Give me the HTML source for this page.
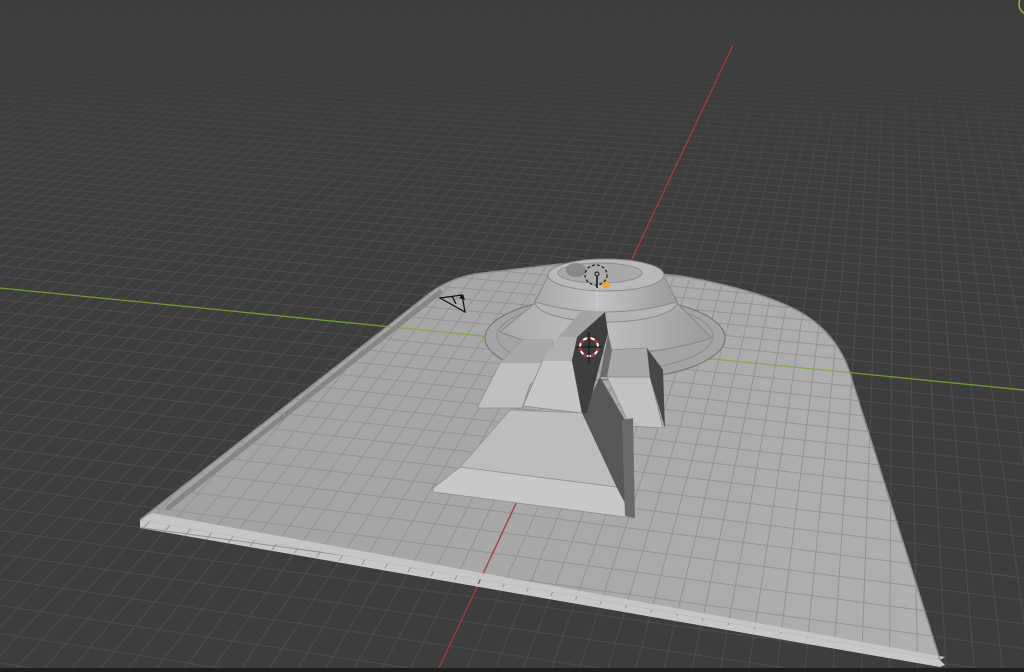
<!DOCTYPE html>
<html><head><meta charset="utf-8"><style>
html,body{margin:0;padding:0;background:#3d3d3d;width:1024px;height:672px;overflow:hidden}
svg{display:block}
</style></head><body>
<svg id="s" width="1024" height="672" viewBox="0 0 1024 672" xmlns="http://www.w3.org/2000/svg">
<defs>
<clipPath id="plateClip"><path d="M140,520 L425,297 Q445,280 475,274 L560,264 L680,276 Q760,290 800,312 Q840,335 852,380 L940,660 L140,528 Z"/></clipPath>
<clipPath id="scr"><rect x="0" y="0" width="1024" height="672"/></clipPath>
<linearGradient id="fade" x1="0" y1="0" x2="0" y2="1">
<stop offset="0" stop-color="#3d3d3d" stop-opacity="1"/>
<stop offset="0.15" stop-color="#3d3d3d" stop-opacity="0.9"/>
<stop offset="0.55" stop-color="#3d3d3d" stop-opacity="0.3"/>
<stop offset="1" stop-color="#3d3d3d" stop-opacity="0"/>
</linearGradient>
<linearGradient id="plateG" x1="0" y1="0" x2="1" y2="0">
<stop offset="0" stop-color="#a2a2a2"/><stop offset="1" stop-color="#b0b0b0"/>
</linearGradient>
<linearGradient id="domeG" x1="0" y1="0" x2="1" y2="0">
<stop offset="0" stop-color="#a8a8a8"/><stop offset="0.45" stop-color="#c2c2c2"/><stop offset="1" stop-color="#9a9a9a"/>
</linearGradient>
</defs>
<g clip-path="url(#scr)">
<rect width="1024" height="672" fill="#3d3d3d"/>
<g id="floor" stroke="#4d4d4d" stroke-width="1" fill="none"></g>
<rect x="0" y="0" width="1024" height="300" fill="url(#fade)"/>
<line x1="437" y1="672" x2="733" y2="45" stroke="#b03a3a" stroke-width="1.2"/>
<line x1="0" y1="288" x2="1024" y2="390" stroke="#6f9a2e" stroke-width="1.3"/>
<path d="M140,520 L140,528 L940,667 L945,665 L940,660 Z" fill="#c8c8c8"/>
<path d="M140,520 L425,297 Q445,280 475,274 L560,264 L680,276 Q760,290 800,312 Q840,335 852,380 L940,660 L140,520 Z" fill="url(#plateG)"/>
<g clip-path="url(#plateClip)">
<g id="plategrid" stroke="#939393" stroke-width="1" fill="none"></g>
<line x1="0" y1="288" x2="1024" y2="390" stroke="#7fae3a" stroke-width="1.3" opacity="0.8"/>
<line x1="437" y1="672" x2="540" y2="452" stroke="#b03a3a" stroke-width="1.3"/>
</g>
<path d="M140,520 L152,513 L945,657 L940,660 Z" fill="#c6c6c6"/>
<path d="M168,508 L440,292" stroke="#858585" stroke-width="5" stroke-linecap="round"/>
<path d="M140,520 L425,297 Q445,280 475,274 L560,264 L680,276 Q760,290 800,312 Q840,335 852,380 L940,660" stroke="#8e8e8e" stroke-width="1.5" fill="none"/>
<ellipse cx="605" cy="338" rx="120" ry="42" fill="#a4a4a4" stroke="#767676" stroke-width="1.2"/>
<ellipse cx="605" cy="336" rx="108" ry="35" fill="none" stroke="#8a8a8a" stroke-width="1"/>
<path d="M500,332 Q600,372 712,338 L677,303 Q606,322 535,303 Z" fill="url(#domeG)" stroke="#868686"/>
<ellipse cx="606" cy="302" rx="71" ry="20" fill="#b4b4b4" stroke="#888"/>
<path d="M535,302 Q606,322 677,302 L664,276 Q606,292 548,276 Z" fill="url(#domeG)" stroke="#8a8a8a"/>
<ellipse cx="606" cy="275" rx="58" ry="16" fill="#b9b9b9" stroke="#888"/>
<ellipse cx="600" cy="273" rx="42" ry="10" fill="#a9a9a9" stroke="#8c8c8c"/>
<ellipse cx="576" cy="270" rx="10" ry="7" fill="#888"/>
<ellipse cx="596" cy="275" rx="11" ry="10" fill="none" stroke="#222" stroke-width="1.3" stroke-dasharray="3 2"/>
<line x1="597" y1="276" x2="597" y2="288" stroke="#111" stroke-width="1.5"/>
<circle cx="597" cy="274" r="2" fill="none" stroke="#111"/>
<circle cx="606" cy="285" r="3.5" fill="#f0a020"/>
<line x1="597" y1="288" x2="597" y2="345" stroke="#cfcfcf" stroke-width="0.8"/>
<path d="M433,488 L460,467 L617,487 L633,518 L433,492 Z" fill="#c8c8c8" stroke="#8a8a8a" stroke-width="0.8"/>
<path d="M460,467 L510,410 L587,413 L617,487 Z" fill="#bdbdbd" stroke="#8e8e8e" stroke-width="0.8"/>
<path d="M477,408 L500,363 L523,340 L553,340 L548,370 L530,385 L522,408 Z" fill="#bfbfbf" stroke="#8a8a8a" stroke-width="0.8"/>
<path d="M500,363 L523,340 L553,340 L548,363 Z" fill="#a9a9a9"/>
<path d="M582,413 L600,377 L625,420 L633,518 L617,488 Z" fill="#575757"/>
<path d="M607,377 L650,377 L663,428 L630,426 Z" fill="#c2c2c2" stroke="#8a8a8a" stroke-width="0.8"/>
<path d="M603,350 L647,348 L650,377 L607,377 Z" fill="#a8a8a8" stroke="#8a8a8a" stroke-width="0.8"/>
<path d="M647,348 L663,370 L665,428 L650,377 Z" fill="#474747"/>
<path d="M622,420 L633,418 L635,518 L625,516 Z" fill="#6a6a6a"/>
<path d="M523,406 L543,360 L572,360 L582,413 Z" fill="#c6c6c6" stroke="#8c8c8c" stroke-width="0.8"/>
<path d="M572,360 L577,337 L605,312 L608,333 L587,413 L582,413 Z" fill="#3e3e3e"/>
<path d="M558,337 L577,337 L605,312 L583,310 Z" fill="#a3a3a3"/>
<path d="M543,360 L558,337 L577,337 L572,360 Z" fill="#b0b0b0"/>
<path d="M600,377 L608,333 L612,350 L607,377 Z" fill="#6c6c6c"/>
<circle cx="589" cy="347" r="9" fill="none" stroke="#fff" stroke-width="2"/>
<circle cx="589" cy="347" r="9" fill="none" stroke="#c02020" stroke-width="2" stroke-dasharray="4 4"/>
<line x1="576" y1="347" x2="602" y2="347" stroke="#111" stroke-width="1"/>
<line x1="589" y1="332" x2="589" y2="364" stroke="#111" stroke-width="1"/>
<g stroke="#111" stroke-width="1.2" fill="none">
<path d="M440,298 L462,295 L465,312 Z M440,298 L465,312 M452,296 L456,304"/>
</g>
<path d="M459,298 L463,294 L465,300 Z" fill="#111"/>
<circle cx="1030" cy="4" r="11" fill="none" stroke="#8fbf2a" stroke-width="1.5"/>
<rect x="0" y="668" width="1024" height="4" fill="#1e1e1e"/>
</g>
</svg>
<script>
(function(){
var NS="http://www.w3.org/2000/svg";
var a=0.0186,b=-0.00277,Ox=590.5,Oy=346.8,Rx=896,Ry=-300,Gx=-5900,Gy=-300;
function P(u,v){var w=a*u+b*v+1;return [(a*Rx*u+b*Gx*v+Ox)/w,(a*Ry*u+b*Gy*v+Oy)/w];}
function add(g,x1,y1,x2,y2){var l=document.createElementNS(NS,"line");l.setAttribute("x1",x1.toFixed(1));l.setAttribute("y1",y1.toFixed(1));l.setAttribute("x2",x2.toFixed(1));l.setAttribute("y2",y2.toFixed(1));g.appendChild(l);}
function build(g){
 for(var u=-50;u<=60;u++){if(a*u+1<=0.05)continue;var p=P(u,0);var dx=p[0]-Gx,dy=p[1]-Gy;add(g,-10,Gy+dy*((-10-Gx)/dx),1040,Gy+dy*((1040-Gx)/dx));}
 for(var v=-700;v<=340;v++){if(b*v+1<=0.05)continue;var p=P(0,v);var dx=p[0]-Rx,dy=p[1]-Ry;if(dy<=0)continue;add(g,Rx+dx*(30-Ry)/dy,30,Rx+dx*(680-Ry)/dy,680);}
}
build(document.getElementById("floor"));
build(document.getElementById("plategrid"));
})();
</script>
</body></html>
